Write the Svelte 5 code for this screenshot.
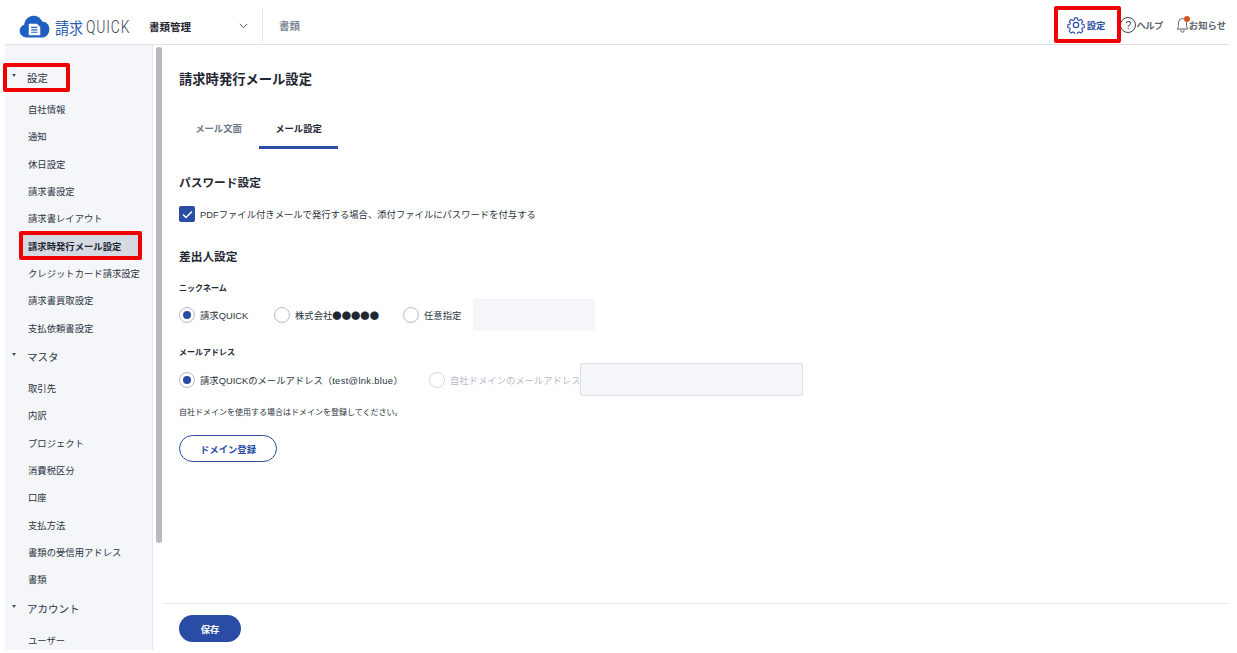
<script>
  const groups = [
    { name: '設定', items: ['自社情報', '通知', '休日設定', '請求書設定', '請求書レイアウト', '請求時発行メール設定', 'クレジットカード請求設定', '請求書買取設定', '支払依頼書設定'] },
    { name: 'マスタ', items: ['取引先', '内訳', 'プロジェクト', '消費税区分', '口座', '支払方法', '書類の受信用アドレス', '書類'] },
    { name: 'アカウント', items: ['ユーザー'] }
  ];
  const active = '請求時発行メール設定';
</script>

<div class="page">
  <header class="top">
    <div class="logo">
      <svg width="31" height="23" viewBox="0 0 32 24" aria-hidden="true">
        <path fill="#1f5fc4" d="M8 23.500C3.800 23.500 .5 20.500 .5 16.500c0-3.200 2-5.600 4.800-6.400C5.900 4.800 10 .8 15 .8c4.200 0 7.600 2.500 9 6 4.400 0 7.500 3.500 7.500 8 0 4.800-3.400 8.700-8 8.700z"/>
        <path fill="#fff" d="M10 9h8.500l3.500 3.500V21H10z"/>
        <path stroke="#1f5fc4" stroke-width="1.300" d="M12.500 13h6.500M12.500 15.500h6.500M12.500 18h6.500"/>
      </svg>
      <span class="logo-a">請求</span><span class="logo-b">QUICK</span>
    </div>
    <div class="app-select">
      <span>書類管理</span>
      <svg width="9" height="6" viewBox="0 0 9 6" aria-hidden="true"><path d="M.8 1l3.700 3.700L8.200 1" fill="none" stroke="#4a5568" stroke-width="1"/></svg>
    </div>
    <div class="nav-tab">書類</div>
    <div class="top-right">
      <div class="top-link settings">
        <svg width="18" height="18" viewBox="0 0 24 24" aria-hidden="true">
          <path fill="none" stroke="#2a4ca4" stroke-width="1.600" stroke-linejoin="round" d="M10 1.500h4l.6 3 2 .9 2.600-1.700 2.900 2.900-1.700 2.600.9 2 3 .6v4l-3 .6-.9 2 1.700 2.600-2.900 2.900-2.600-1.700-2 .9-.6 3h-4l-.6-3-2-.9-2.600 1.700-2.900-2.900 1.700-2.600-.9-2-3-.6v-4l3-.6.9-2-1.700-2.600 2.900-2.900 2.600 1.700 2-.9z" transform="translate(1.200 1.200) scale(.9)"/>
          <circle cx="12" cy="12" r="3.600" fill="none" stroke="#2a4ca4" stroke-width="1.600"/>
        </svg>
        <span>設定</span>
      </div>
      <div class="top-link help">
        <span class="q">?</span><span class="help-t">ヘルプ</span>
      </div>
      <div class="top-link news">
        <span class="bell">
          <svg width="13" height="17" viewBox="0 0 13 17" aria-hidden="true"><path d="M1 13c1-1 1.500-2 1.500-3.500V6.500a4 4 0 0 1 8 0v3c0 1.500.5 2.500 1.500 3.500zM5 13.500v1.300a1.500 1.500 0 0 0 3 0v-1.300" fill="none" stroke="#5a6472" stroke-width="1"/></svg>
          <i></i>
        </span>
        <span>お知らせ</span>
      </div>
    </div>
  </header>

  <div class="body">
    <aside class="side">
      {#each groups as g}
        <div class="group-head"><i class="tri"></i><span>{g.name}</span></div>
        <ul>
          {#each g.items as it}
            <li class:on={it === active}>{it}</li>
          {/each}
        </ul>
      {/each}
    </aside>
    <div class="scroll"><div class="thumb"></div></div>

    <main class="main">
      <div class="content">
        <h1>請求時発行メール設定</h1>
        <div class="tabs">
          <div class="tab first">メール文面</div>
          <div class="tab sel">メール設定</div>
        </div>

        <h2 class="pw">パスワード設定</h2>
        <label class="check">
          <span class="box">
            <svg width="11" height="9" viewBox="0 0 11 9" aria-hidden="true"><path d="M1 4.500L4 7.500 10 1.500" fill="none" stroke="#fff" stroke-width="1.500"/></svg>
          </span>
          <span>PDFファイル付きメールで発行する場合、添付ファイルにパスワードを付与する</span>
        </label>

        <h2 class="sender">差出人設定</h2>
        <div class="label nick">ニックネーム</div>
        <div class="radios r1">
          <span class="radio on"></span><span class="rt w1">請求QUICK</span>
          <span class="radio"></span><span class="rt w2">株式会社<span class="dots">●●●●●</span></span>
          <span class="radio"></span><span class="rt w3">任意指定</span>
          <div class="field soft"></div>
        </div>
        <div class="label mail">メールアドレス</div>
        <div class="radios r2">
          <span class="radio on"></span><span class="rt w4">請求QUICKのメールアドレス（<span class="addr">test@lnk.blue</span>）</span>
          <span class="radio off"></span><span class="rt dim w5">自社ドメインのメールアドレス</span>
          <div class="field boxed"></div>
        </div>
        <p class="note">自社ドメインを使用する場合はドメインを登録してください。</p>
        <button class="outline">ドメイン登録</button>
      </div>
      <footer class="foot"><button class="save">保存</button></footer>
    </main>
  </div>

  <div class="mark m-top"></div>
  <div class="mark m-group"></div>
  <div class="mark m-item"></div>
</div>

<style>
  :global(body) { margin: 0; background: #fff; }
  .page {
    position: relative;
    width: 1237px;
    height: 653px;
    box-sizing: border-box;
    padding: 0 8px 3px 5px;
    display: flex;
    flex-direction: column;
    overflow: hidden;
    font-family: "Liberation Sans", "Noto Sans CJK JP", sans-serif;
    color: #1f2733;
  }
  .top {
    flex: 0 0 45px;
    box-sizing: border-box;
    height: 45px;
    padding-top: 5px;
    border-bottom: 1px solid #dde1ea;
    display: flex;
    align-items: center;
  }
  .logo { display: flex; align-items: center; margin: 4px 0 0 14px; width: 130px; white-space: nowrap; }
  .logo svg { margin-right: 5px; flex: none; }
  .logo-a { display: inline-block; flex: none; font-size: 16px; color: #2a5cb0; line-height: 1; transform: scaleX(.88); transform-origin: left center; width: 31px; font-family: "Noto Sans CJK JP", sans-serif; }
  .logo-b { display: inline-block; flex: none; font-family: "Roboto", sans-serif; font-weight: 300; font-size: 19px; letter-spacing: 1.200px; color: #3a4350; line-height: 1; transform: scaleX(.73); transform-origin: left center; }
  .app-select { display: flex; align-items: center; width: 114px; justify-content: space-between; padding-right: 14px; box-sizing: border-box; font-size: 10.500px; font-weight: 700; height: 36px; align-self: flex-end; border-right: 1px solid #e6e9ef; }
  .nav-tab { margin: 2px 0 0 16px; font-size: 10.500px; font-weight: 700; color: #7b8796; }
  .top-right { margin-left: auto; display: flex; align-items: center; }
  .top-link { display: flex; align-items: center; font-size: 9.330px; font-weight: 700; color: #5a6472; }
  .settings { color: #2a4ca4; margin-right: 15px; }
  .settings svg { margin-right: 2px; }
  .help { margin-right: 13px; }
  .help-t { letter-spacing: -.5px; }
  .q { width: 16px; height: 16px; box-sizing: border-box; border: 1px solid #3c4654; border-radius: 50%; display: flex; align-items: center; justify-content: center; font-size: 11px; font-weight: 400; color: #3c4654; }
  .bell { position: relative; display: flex; width: 13px; height: 17px; }
  .bell i { position: absolute; top: 0; left: 8px; width: 6px; height: 6px; border-radius: 50%; background: #d9541e; }
  .news { margin-right: 3px; }

  .body { flex: 1; min-height: 0; display: flex; }
  .side {
    width: 148px;
    box-sizing: border-box;
    background: #f5f6fa;
    border-right: 1px solid #e6e9ef;
    padding-top: 18px;
    overflow: hidden;
  }
  .group-head { display: flex; align-items: center; height: 29px; font-size: 10.500px; color: #2b3440; padding-left: 7px; }
  .tri { width: 0; height: 0; border-left: 2.500px solid transparent; border-right: 2.500px solid transparent; border-top: 3.500px solid #46546c; margin: -4px 11px 0 0; }
  ul { list-style: none; margin: 0; padding: 4px 0 0; }
  li { height: 27.330px; box-sizing: border-box; padding-top: 1px; line-height: 26.330px; padding-left: 23px; font-size: 9.330px; color: #2b3440; white-space: nowrap; }
  li.on { font-weight: 700; background: #d4d9e2; margin-right: 11px; margin-left: 17px; padding-left: 6px; color: #1f2733; }
  .scroll { width: 10px; padding: 2px 1px 0 3px; box-sizing: border-box; }
  .thumb { width: 6px; height: 496px; background: #b9b9b9; border-radius: 3px; }

  .main { flex: 1; min-width: 0; display: flex; flex-direction: column; }
  .content { flex: 1; min-height: 0; padding-left: 16px; box-sizing: border-box; }
  h1 { margin: 27px 0 0; font-size: 13.300px; line-height: 16px; font-weight: 700; }
  .tabs { display: flex; margin: 21px 0 0 1px; height: 40px; }
  .tab { width: 79px; height: 37px; display: flex; align-items: center; justify-content: center; font-size: 9.330px; font-weight: 700; color: #6b7889; border-bottom: 3px solid transparent; }
  .tab.first { padding-right: 2px; box-sizing: content-box; width: 77px; }
  .tab.sel { color: #1f2733; border-bottom-color: #2a4ca4; }
  h2 { margin: 0; font-size: 11.700px; line-height: 16px; font-weight: 700; }
  .pw { margin-top: 26px; }
  .check { display: flex; align-items: center; margin-top: 15px; height: 16px; font-size: 9.330px; color: #2b3440; }
  .box { width: 16px; height: 16px; border-radius: 2px; background: #2a4ca4; display: flex; align-items: center; justify-content: center; margin-right: 5px; flex: none; }
  .sender { margin-top: 27px; }
  .label { font-size: 8px; font-weight: 700; line-height: 12px; }
  .nick { margin-top: 18px; }
  .mail { margin-top: 16px; }
  .radios { display: flex; align-items: center; font-size: 9.330px; color: #2b3440; white-space: nowrap; }
  .r1 { margin-top: 4px; height: 32px; }
  .r2 { margin-top: 4px; height: 33px; }
  .radio { width: 16px; height: 16px; box-sizing: border-box; border: 1px solid #b4bccb; border-radius: 50%; background: #fff; display: block; margin-right: 5px; flex: none; position: relative; }
  .radio.on::after { content: ""; position: absolute; left: 3px; top: 3px; width: 8px; height: 8px; border-radius: 50%; background: #2a4ca4; }
  .radio.off { border-color: #d5d9e2; }
  .rt { display: block; flex: none; }
  .w1 { width: 74px; }
  .w2 { width: 108px; }
  .w3 { width: 49px; }
  .w4 { width: 229px; }
  .w5 { width: 130px; }
  .dots { font-family: "Noto Sans CJK JP", sans-serif; color: #1f2733; }
  .addr { letter-spacing: .35px; }
  .dim { color: #b4bccb; }
  .field { height: 32px; border-radius: 2px; box-sizing: border-box; background: #f5f6fa; }
  .soft { width: 122px; }
  .boxed { width: 223px; height: 33px; border: 1px solid #dde1ea; }
  .note { margin: 11px 0 0; font-size: 8px; line-height: 12px; color: #2b3440; }
  .outline { display: block; margin-top: 16px; width: 98px; height: 27px; border: 1px solid #2a4ca4; border-radius: 14px; background: #fff; color: #2a4ca4; font: 700 9.330px "Liberation Sans", "Noto Sans CJK JP", sans-serif; padding: 0; }
  .foot { flex: 0 0 47px; box-sizing: border-box; border-top: 1px solid #e8eaef; padding: 11px 0 0 16px; }
  .save { width: 62px; height: 27px; border: 0; border-radius: 14px; background: #2a4ca4; color: #fff; font: 700 9.330px "Liberation Sans", "Noto Sans CJK JP", sans-serif; padding: 0; display: block; }

  .mark { position: absolute; border: 4px solid #f00000; border-radius: 2px; box-sizing: border-box; }
  .m-top { left: 1054px; top: 6px; width: 67px; height: 37px; }
  .m-group { left: 3px; top: 63px; width: 67px; height: 29px; }
  .m-item { left: 19px; top: 231px; width: 123px; height: 29px; }
</style>
